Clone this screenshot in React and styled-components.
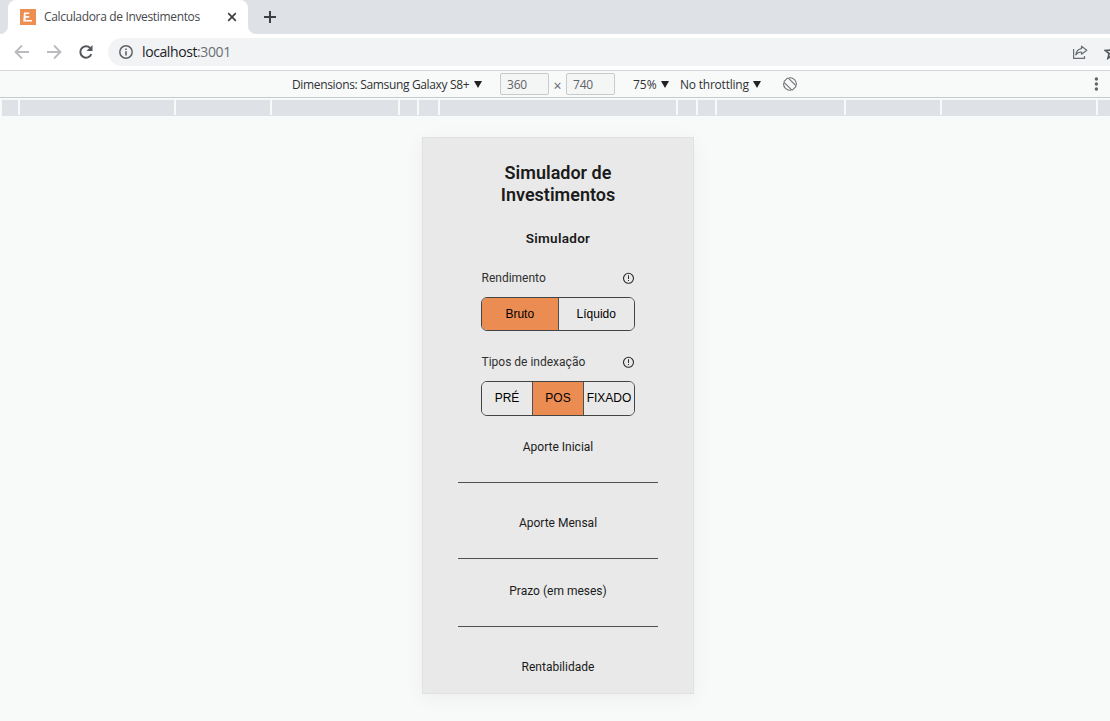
import React from 'react';
import styled, { createGlobalStyle } from 'styled-components';

const Global = createGlobalStyle`
  * { box-sizing: border-box; }
  body { margin: 0; background: #f8faf9; overflow: hidden; font-family: "Open Sans", "Noto Sans", sans-serif; }
  button, input { font: inherit; margin: 0; padding: 0; }
  svg { display: block; flex: none; }
`;

const Window = styled.div`
  display: flex;
  flex-direction: column;
  width: 1110px;
  height: 721px;
  overflow: hidden;
  background: #f8faf9;
`;

const TabStrip = styled.div`
  display: flex;
  align-items: center;
  height: 34px;
  background: #dee1e6;
`;

const TabCurve = styled.div`
  width: 8px;
  height: 8px;
  align-self: flex-end;
  background: radial-gradient(circle at ${(p) => (p.$right ? '100%' : '0')} 0, #dee1e6 7.5px, #fff 8.5px);
`;

const Tab = styled.div`
  display: flex;
  align-items: center;
  width: 240px;
  height: 34px;
  padding: 0 11px 0 12px;
  border-radius: 8px 8px 0 0;
  background: #fff;
`;

const TabTitle = styled.span`
  flex: 1;
  margin-left: 8px;
  font-size: 12px;
  line-height: 16px;
  letter-spacing: -0.34px;
  white-space: nowrap;
  color: #45494d;
`;

const NewTab = styled.div`
  margin-left: 8px;
`;

const NavBar = styled.div`
  display: flex;
  align-items: center;
  height: 37px;
  padding-left: 14px;
  border-bottom: 1px solid #d5d7da;
  background: #fff;
`;

const NavIcons = styled.div`
  display: flex;
  gap: 16px;
  width: 94px;
`;

const Address = styled.div`
  display: flex;
  align-items: center;
  flex: 1;
  height: 28px;
  padding-left: 10px;
  border-radius: 14px 0 0 14px;
  background: #f1f3f4;
  overflow: hidden;
`;

const Url = styled.span`
  flex: 1;
  margin-left: 8px;
  font-size: 14px;
  line-height: 20px;
  letter-spacing: -0.4px;
  color: #202124;
  span { color: #6b6f74; }
`;

const AddressActions = styled.div`
  display: flex;
  gap: 16px;
  width: 38px;
`;

const DeviceBar = styled.div`
  display: flex;
  align-items: center;
  height: 27px;
  padding-left: 292px;
  border-bottom: 1px solid #c9cccf;
  font-size: 12px;
  color: #303135;
`;

const Dropdown = styled.div`
  display: flex;
  align-items: center;
  justify-content: space-between;
  width: ${(p) => p.$width}px;
  margin-left: ${(p) => p.$before || 0}px;
  letter-spacing: ${(p) => p.$tracking || 0}px;
  white-space: nowrap;
`;

const Caret = styled.i`
  border: 4px solid transparent;
  border-top: 7px solid #222;
  border-bottom: 0;
`;

const SizeInput = styled.input`
  width: 49px;
  height: 22px;
  padding-left: 6px;
  border: 1px solid #c8cacc;
  border-radius: 2px;
  background: #f4f5f5;
  color: #606468;
  letter-spacing: -0.2px;
`;

const Times = styled.span`
  width: 17px;
  padding-top: 3px;
  font-size: 14px;
  line-height: 16px;
  text-align: center;
  color: #606468;
`;

const FirstInput = styled(SizeInput)`
  margin-left: 18px;
`;

const RotateIcon = styled.div`
  flex: 1;
  margin-left: 22px;
`;

const Ruler = styled.div`
  display: flex;
  height: 16px;
  margin: 2px 0 0 2px;
  padding-bottom: 1px;
  background: #dee1e6;
`;

const RulerStep = styled.div`
  flex: none;
  width: ${(p) => p.$width}px;
  border-right: 2px solid #f8faf9;
`;

const Viewport = styled.main`
  display: flex;
  flex: 1;
  justify-content: center;
  align-items: flex-start;
  padding: 21px 0 0 6px;
`;

const Phone = styled.section`
  display: flex;
  flex-direction: column;
  align-items: center;
  width: 272px;
  height: 557px;
  border: 1px solid #e0e1e1;
  background: #e9e9e9;
  box-shadow: 0 4px 20px rgba(0, 0, 0, 0.05);
  font-family: Roboto, sans-serif;
  color: #1b1b1b;
  overflow: hidden;
`;

const Title = styled.h1`
  width: 160px;
  margin: 24px 0 0;
  font-size: 18px;
  font-weight: 600;
  line-height: 22px;
  text-align: center;
`;

const Subtitle = styled.h2`
  margin: 22px 0 0;
  font-size: 13.5px;
  font-weight: 600;
  letter-spacing: 0.3px;
  line-height: 20px;
`;

const Group = styled.div`
  width: 154px;
  margin-top: ${(p) => p.$top}px;
`;

const GroupHead = styled.div`
  display: flex;
  align-items: center;
  justify-content: space-between;
  height: 20px;
  padding: 0 0 0 0.5px;
  font-size: 12px;
  color: #303030;
`;

const Segmented = styled.div`
  display: flex;
  height: ${(p) => p.$height}px;
  margin-top: 9px;
  border: 1px solid #444;
  border-radius: 6px;
  overflow: hidden;
`;

const Segment = styled.button`
  flex: 1 1 0;
  min-width: 0;
  padding-bottom: ${(p) => p.$lift}px;
  border: 0;
  border-left: ${(p) => (p.$first ? '0' : '1px solid #505050')};
  background: ${(p) => (p.$active ? '#eb8c52' : '#e9e9e9')};
  font-family: "Liberation Sans", Arial, sans-serif;
  font-size: 12px;
  white-space: nowrap;
  color: #000;
`;

const Field = styled.label`
  display: flex;
  flex-direction: column;
  align-items: center;
  width: 200px;
  margin-top: ${(p) => p.$top}px;
  font-size: 12px;
  line-height: 20px;
`;

const FieldInput = styled.input`
  width: 200px;
  height: 26px;
  border: 0;
  border-bottom: 1px solid #505050;
  background: transparent;
  outline: 0;
`;

const Favicon = () => (
  <svg width="16" height="16" viewBox="0 0 16 16">
    <rect width="16" height="16" fill="#ed8e53" />
    <path d="M4 3.5h5.2v1.6H5.6v2h3.6v1.6H5.6v2.2H12v1.6H3.2z" fill="#fff" />
  </svg>
);

const Arrow = ({ forward }) => (
  <svg width="16" height="16" viewBox="0 0 16 16" fill="none" stroke="#b9bbbe" strokeWidth="1.8">
    <path d={forward ? 'M1 8h13M8 1.5 14.5 8 8 14.5' : 'M15 8H2M8 1.5 1.5 8 8 14.5'} />
  </svg>
);

const Reload = () => (
  <svg width="16" height="16" viewBox="0 0 16 16">
    <path d="M13.3 10.2A5.7 5.7 0 1 1 12.2 4.1" fill="none" stroke="#54575b" strokeWidth="2" />
    <path d="M14.5 1v6h-6z" fill="#54575b" />
  </svg>
);

const Info = () => (
  <svg width="16" height="16" viewBox="0 0 16 16">
    <circle cx="8" cy="8" r="6.2" fill="none" stroke="#5f6368" strokeWidth="1.5" />
    <path d="M7.2 7.2h1.6v4.2H7.2zM7.2 4.5h1.6v1.6H7.2z" fill="#5f6368" />
  </svg>
);

const Share = () => (
  <svg width="16" height="16" viewBox="0 0 16 16" fill="none" stroke="#6a6d71" strokeWidth="1.2">
    <path d="M1.6 5v9.4h10.9v-2.4" />
    <path d="M9.5 2.2 14.8 6.2 9.5 10.2V8C7 8 5.2 8.8 3.8 10.8 4.3 7.5 6 5 9.5 4.6z" strokeLinejoin="round" />
  </svg>
);

const Star = () => (
  <svg width="16" height="16" viewBox="0 0 16 16" fill="none" stroke="#54575b" strokeWidth="1.7">
    <path d="m8 2 1.8 4.2 4.7.4-3.6 3 1.1 4.6L8 11.8l-4 2.4 1.1-4.6-3.6-3 4.7-.4z" />
  </svg>
);

const Rotate = () => (
  <svg width="14" height="14" viewBox="0 0 14 14" fill="none" stroke="#707377" strokeWidth="1.1">
    <rect x="4" y="1" width="6" height="12" rx="1" transform="rotate(-45 7 7)" />
    <path d="M6 .8A6.3 6.3 0 0 1 13.3 8M8 13.2A6.3 6.3 0 0 1 .7 6" />
  </svg>
);

const Alert = () => (
  <svg width="12" height="12" viewBox="0 0 12 12">
    <circle cx="5.5" cy="6.3" r="5" fill="none" stroke="#2b2b2b" strokeWidth="1.1" />
    <path d="M5 3.3h1v3.6H5zM5 7.9h1v1.2H5z" fill="#2b2b2b" />
  </svg>
);

const STEPS = [18, 156, 96, 128, 19, 21, 238, 20, 19, 129, 96, 156];

const Choice = ({ label, options, active, top, height, lift = 0 }) => (
  <Group $top={top}>
    <GroupHead>{label}<Alert /></GroupHead>
    <Segmented $height={height}>
      {options.map((o, i) => (
        <Segment key={o} type="button" $first={i === 0} $active={o === active} $lift={lift}>{o}</Segment>
      ))}
    </Segmented>
  </Group>
);

export default function App() {
  return (
    <>
      <Global />
      <Window>
        <TabStrip>
          <TabCurve />
          <Tab>
            <Favicon />
            <TabTitle>Calculadora de Investimentos</TabTitle>
            <svg width="10" height="10" viewBox="0 0 10 10" stroke="#3c4043" strokeWidth="1.7">
              <path d="m1.2 1.2 7.6 7.6M8.8 1.2 1.2 8.8" />
            </svg>
          </Tab>
          <TabCurve $right />
          <NewTab>
            <svg width="12" height="12" viewBox="0 0 12 12" stroke="#3c4043" strokeWidth="2">
              <path d="M6 0v12M0 6h12" />
            </svg>
          </NewTab>
        </TabStrip>
        <NavBar>
          <NavIcons><Arrow /><Arrow forward /><Reload /></NavIcons>
          <Address>
            <Info />
            <Url>localhost<span>:3001</span></Url>
            <AddressActions><Share /><Star /></AddressActions>
          </Address>
        </NavBar>
        <DeviceBar>
          <Dropdown $width={190} $tracking={-0.34}>Dimensions: Samsung Galaxy S8+<Caret /></Dropdown>
          <FirstInput defaultValue="360" />
          <Times>×</Times>
          <SizeInput defaultValue="740" />
          <Dropdown $width={36} $before={18}>75%<Caret /></Dropdown>
          <Dropdown $width={81} $before={11} $tracking={-0.22}>No throttling<Caret /></Dropdown>
          <RotateIcon><Rotate /></RotateIcon>
          <svg width="28" height="14" viewBox="0 0 28 14" fill="#5f6368">
            <circle cx="14.4" cy="2" r="1.7" /><circle cx="14.4" cy="7" r="1.7" /><circle cx="14.4" cy="12" r="1.7" />
          </svg>
        </DeviceBar>
        <Ruler>
          {STEPS.map((w, i) => <RulerStep key={i} $width={w} />)}
        </Ruler>
        <Viewport>
          <Phone>
            <Title>Simulador de Investimentos</Title>
            <Subtitle>Simulador</Subtitle>
            <Choice label="Rendimento" options={['Bruto', 'Líquido']} active="Bruto" top={20} height={34} />
            <Choice label="Tipos de indexação" options={['PRÉ', 'POS', 'FIXADO']} active="POS" top={21} height={35} lift={2} />
            <Field $top={21}>Aporte Inicial<FieldInput /></Field>
            <Field $top={30}>Aporte Mensal<FieldInput /></Field>
            <Field $top={22}>Prazo (em meses)<FieldInput /></Field>
            <Field $top={30}>Rentabilidade</Field>
          </Phone>
        </Viewport>
      </Window>
    </>
  );
}
